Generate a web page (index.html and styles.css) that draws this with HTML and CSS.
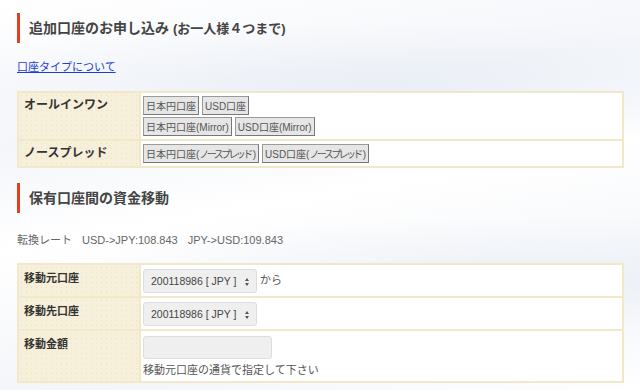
FILE: index.html
```html
<!DOCTYPE html>
<html lang="ja">
<head>
	<meta charset="UTF-8">
	<title>口座管理</title>
	<link rel="stylesheet" href="styles.css">
</head>
<body>
	<div class="page">
		<h2 class="ttl">追加口座のお申し込み <span class="sub">(お一人様４つまで)</span></h2>
		<p class="lnk"><a href="#">口座タイプについて</a></p>
		<table class="tbl tbl1">
			<tr>
				<th>オールインワン</th>
				<td>
					<div class="btns">
						<button class="btn">日本円口座</button><button class="btn">USD口座</button>
					</div>
					<div class="btns">
						<button class="btn">日本円口座(Mirror)</button><button class="btn">USD口座(Mirror)</button>
					</div>
				</td>
			</tr>
			<tr>
				<th>ノースプレッド</th>
				<td>
					<div class="btns">
						<button class="btn">日本円口座(<span class="kana">ノースプレッド</span>)</button><button class="btn">USD口座(<span class="kana">ノースプレッド</span>)</button>
					</div>
				</td>
			</tr>
		</table>

		<h2 class="ttl ttl2">保有口座間の資金移動</h2>
		<p class="rate">転換レート<span>USD-&gt;JPY:108.843</span><span>JPY-&gt;USD:109.843</span></p>
		<table class="tbl tbl2">
			<tr>
				<th>移動元口座</th>
				<td><span class="sel">200118986 [ JPY ]<i class="arr"></i></span> から</td>
			</tr>
			<tr>
				<th>移動先口座</th>
				<td><span class="sel">200118986 [ JPY ]<i class="arr"></i></span></td>
			</tr>
			<tr>
				<th>移動金額</th>
				<td><input class="inp" type="text"><div class="note">移動元口座の通貨で指定して下さい</div></td>
			</tr>
		</table>
	</div>
</body>
</html>
```

FILE: styles.css
```css
*{margin:0;padding:0;box-sizing:border-box;}
body{
	font-family:"Liberation Sans","Noto Sans CJK JP",sans-serif;
	color:#555;
	background:#fdfdfe;
	background-image:
		radial-gradient(ellipse 700px 90px at 60% 22%, rgba(225,232,242,0.55), rgba(255,255,255,0) 70%),
		radial-gradient(ellipse 600px 80px at 80% 70%, rgba(225,232,242,0.45), rgba(255,255,255,0) 70%),
		linear-gradient(170deg,#fff 0%,#f4f6fa 30%,#fff 50%,#f3f5f9 80%,#fff 100%);
	height:390px;
	overflow:hidden;
}
.page{padding:13px 16px 0 17px;}
.ttl{
	border-left:3px solid #e2401c;
	height:30px;
	line-height:30px;
	padding-left:9px;
	font-size:14px;
	font-weight:bold;
	color:#444;
}
.ttl .sub{font-size:13px;}
.lnk{margin-top:16px;font-size:11px;line-height:16px;}
.lnk a{color:#1a3fd6;}
.tbl{
	width:100%;
	border-collapse:collapse;
	margin-top:16px;
	background:#fff;
}
.tbl th,.tbl td{border:2px solid #f1e7c9;vertical-align:top;}
.tbl th{
	width:122px;
	text-align:left;
	font-size:12px;
	line-height:17px;
	color:#333;
	padding:4px 5px 3px;
	background-color:#f6efd9;
	background-image:radial-gradient(#ebe1c2 0.6px, transparent 0.8px);
	background-size:5px 5px;
}
.tbl1 td{padding:3px 2px 3px;}
.btns{display:flex;gap:3px;}
.btns + .btns{margin-top:2px;}
.btn{
	font-family:inherit;
	font-size:10px;
	color:#555;
	height:19px;
	padding:0 2px;
	background:#e6e6e6;
	border:1px solid #9a9a9a;
	border-right-color:#777;
	border-bottom-color:#777;
}
.kana{letter-spacing:-2.6px;margin-right:2px;}
.ttl2{margin-top:15px;}
.rate{margin-top:19px;font-size:11px;line-height:16px;color:#666;}
.rate span{margin-left:10px;}
.tbl2{margin-top:15px;}
.tbl2 th{font-size:11px;padding:5px 5px;}
.tbl2 td{padding:4px 2px 3px;font-size:11px;color:#555;}
.sel{
	display:inline-flex;
	align-items:center;
	width:114px;
	height:24px;
	padding-left:7px;
	font-size:10.5px;
	color:#444;
	background:#efefef;
	border:1px solid #ddd;
	border-radius:3px;
	position:relative;
	vertical-align:middle;
}
.arr{position:absolute;right:6px;top:8px;width:5px;height:8px;}
.arr::before,.arr::after{content:"";position:absolute;left:0;border-left:2.5px solid transparent;border-right:2.5px solid transparent;}
.arr::before{top:0;border-bottom:3px solid #555;}
.arr::after{bottom:0;border-top:3px solid #555;}
.inp{
	display:block;
	width:129px;
	height:23px;
	margin-top:1px;
	background:#efefef;
	border:1px solid #ddd;
	border-radius:3px;
}
.note{font-size:11px;margin-top:3px;line-height:16px;}
```
